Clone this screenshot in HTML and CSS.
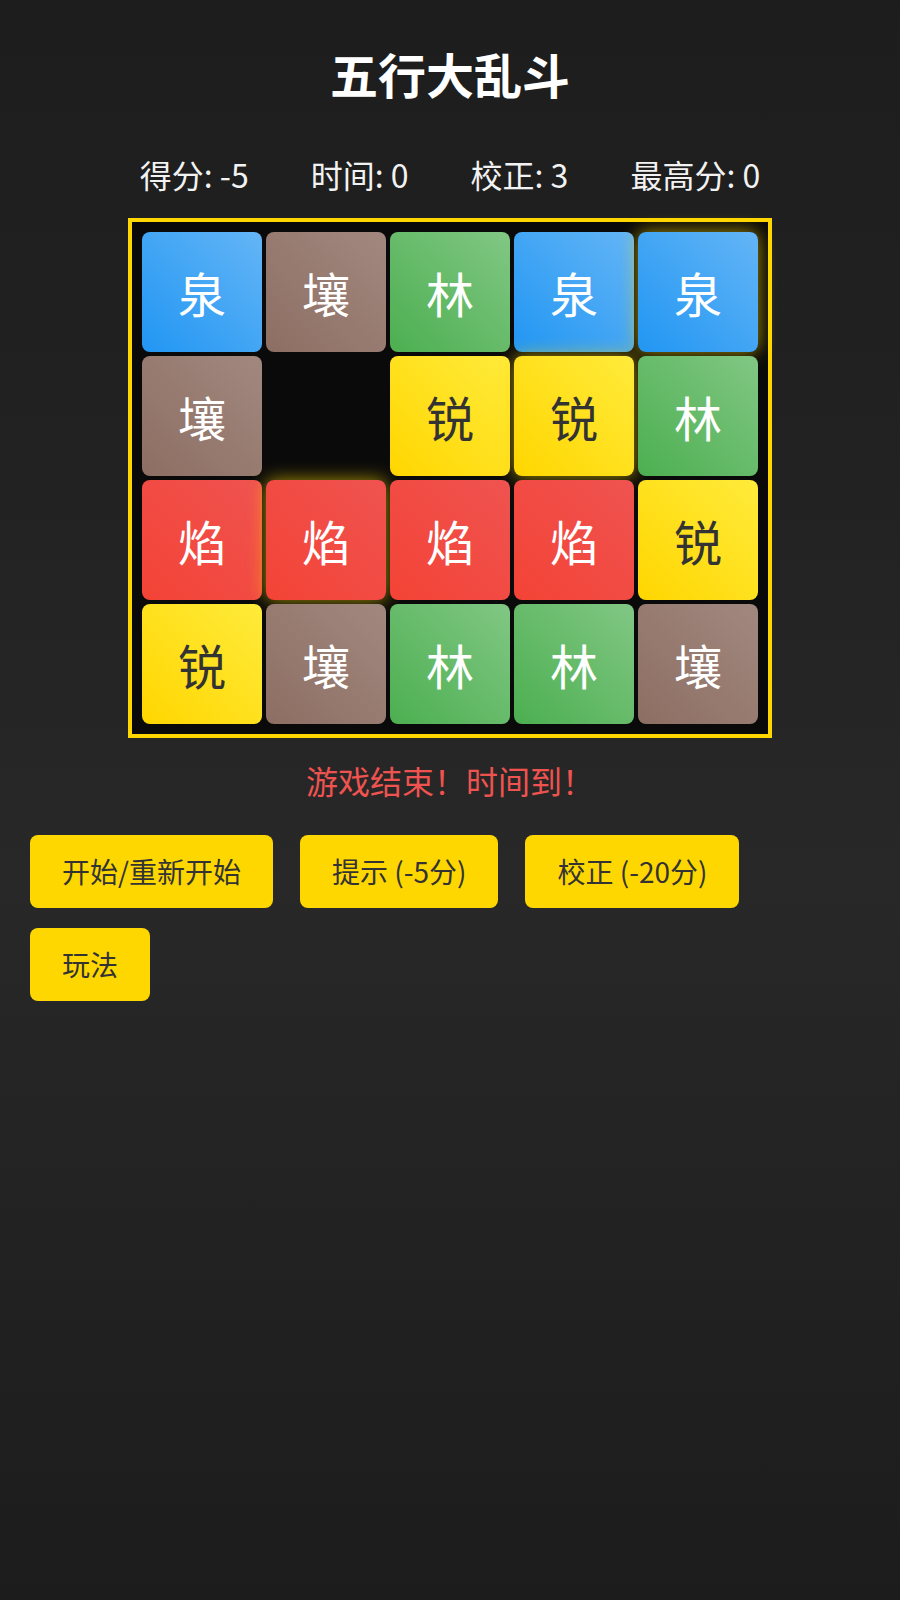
FILE: index.html
```html
<!DOCTYPE html>
<html lang="zh">
<head>
<meta charset="utf-8">
<title>五行大乱斗</title>
<link rel="stylesheet" href="styles.css">
</head>
<body>
<div class="app">
  <h1 class="title">五行大乱斗</h1>
  <div class="stats">
    <span class="stat">得分: -5</span>
    <span class="stat">时间: 0</span>
    <span class="stat">校正: 3</span>
    <span class="stat">最高分: 0</span>
  </div>
  <div class="board">
    <div class="tile water">泉</div>
    <div class="tile earth">壤</div>
    <div class="tile wood">林</div>
    <div class="tile water">泉</div>
    <div class="tile water glow">泉</div>

    <div class="tile earth">壤</div>
    <div class="tile empty"></div>
    <div class="tile metal">锐</div>
    <div class="tile metal glow">锐</div>
    <div class="tile wood">林</div>

    <div class="tile fire">焰</div>
    <div class="tile fire glow">焰</div>
    <div class="tile fire">焰</div>
    <div class="tile fire">焰</div>
    <div class="tile metal">锐</div>

    <div class="tile metal">锐</div>
    <div class="tile earth">壤</div>
    <div class="tile wood">林</div>
    <div class="tile wood">林</div>
    <div class="tile earth">壤</div>
  </div>
  <div class="message">游戏结束！时间到！</div>
  <div class="controls">
    <button class="btn">开始/重新开始</button>
    <button class="btn">提示 (-5分)</button>
    <button class="btn">校正 (-20分)</button>
    <button class="btn">玩法</button>
  </div>
</div>
</body>
</html>
```

FILE: styles.css
```css
html, body {
  margin: 0;
  padding: 0;
}
body {
  min-height: 1600px;
  background: linear-gradient(to bottom, #1d1d1d 0%, #222222 30%, #282828 55%, #1c1c1c 100%);
  color: #ffffff;
  font-family: "Noto Sans CJK SC", "Noto Sans", sans-serif;
}
.app {
  padding: 0 30px;
}
.title {
  margin: 38px 0 0;
  font-size: 48px;
  line-height: 70px;
  font-weight: 700;
  text-align: center;
}
.stats {
  margin-top: 43px;
  display: flex;
  justify-content: center;
  gap: 62px;
  font-size: 32px;
  line-height: 46px;
  color: #f2f2f2;
}
.board {
  margin: 21px auto 0;
  width: fit-content;
  display: grid;
  grid-template-columns: repeat(5, 120px);
  grid-auto-rows: 120px;
  gap: 4px;
  padding: 10px;
  border: 4px solid #ffd700;
  background: #0a0a0a;
}
.tile {
  border-radius: 8px;
  display: flex;
  align-items: center;
  justify-content: center;
  font-size: 48px;
  color: #ffffff;
}
.water { background: linear-gradient(45deg, #2196f3, #64b5f6); }
.earth { background: linear-gradient(45deg, #8d6e63, #a1887f); }
.wood  { background: linear-gradient(45deg, #4caf50, #81c784); }
.fire  { background: linear-gradient(45deg, #f44336, #ef5350); }
.metal { background: linear-gradient(45deg, #ffd600, #ffeb3b); color: #333333; }
.empty { background: transparent; }
.glow {
  box-shadow: 0 0 18px rgba(255, 215, 0, 0.65);
}
.message {
  margin-top: 19px;
  text-align: center;
  font-size: 32px;
  line-height: 46px;
  color: #ef5350;
}
.controls {
  margin-top: 32px;
  display: flex;
  flex-wrap: wrap;
  column-gap: 27px;
  row-gap: 20px;
}
.btn {
  font-family: "Noto Sans CJK SC", "Noto Sans", sans-serif;
  font-size: 28px;
  line-height: 41px;
  padding: 16px 32px;
  border: none;
  border-radius: 8px;
  background: #ffd700;
  color: #333333;
}
```
